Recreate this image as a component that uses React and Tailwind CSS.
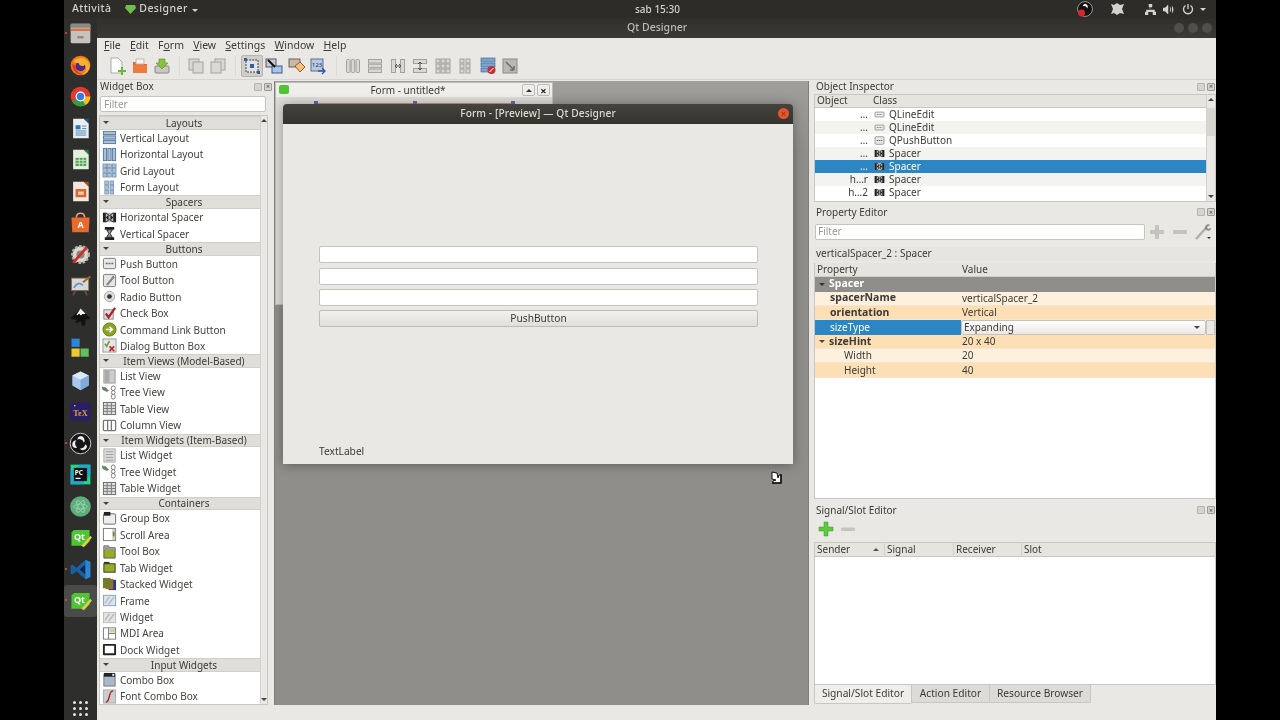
import React from 'react';

const FONT = 'font-["Noto_Sans",sans-serif]';

function Ico({ k, s = 15 }) {
  const p = { width: s, height: s, viewBox: '0 0 16 16', className: 'shrink-0' };
  switch (k) {
    case 'vl': return <svg {...p}><g fill="#a9c0d8" stroke="#56779b"><rect x="1.5" y="1.5" width="13" height="3.4" /><rect x="1.5" y="6.3" width="13" height="3.4" /><rect x="1.5" y="11.1" width="13" height="3.4" /></g></svg>;
    case 'hl': return <svg {...p}><g fill="#a9c0d8" stroke="#56779b"><rect x="1.5" y="1.5" width="3.4" height="13" /><rect x="6.3" y="1.5" width="3.4" height="13" /><rect x="11.1" y="1.5" width="3.4" height="13" /></g></svg>;
    case 'gl': return <svg {...p}><g fill="#a9c0d8" stroke="#6a88a8" strokeWidth=".7">{[1, 6, 11].flatMap(x => [1, 6, 11].map(y => <rect key={x + '-' + y} x={x} y={y} width="4" height="4" />))}</g></svg>;
    case 'fl': return <svg {...p}><g fill="#a9c0d8" stroke="#6a88a8" strokeWidth=".7">{[3, 8.5].flatMap(x => [1, 6, 11].map(y => <rect key={x + '-' + y} x={x} y={y} width="4" height="4" />))}</g></svg>;
    case 'hs': return <svg {...p}><rect x="1" y="3" width="14" height="10" fill="#bbb" /><path d="M1 3h3v10H1zM12 3h3v10h-3zM4 8l3-3v6zM12 8L9 5v6z" fill="#222" /><path d="M4 3l4 3 4-3M4 13l4-3 4 3" stroke="#222" fill="none" /></svg>;
    case 'vs': return <svg {...p}><path d="M3 1h10v3H3zM3 12h10v3H3z" fill="#222" /><path d="M5 4h6L8.6 8 11 12H5l2.4-4z" fill="#999" stroke="#222" /></svg>;
    case 'pb': return <svg {...p}><rect x="1.5" y="2.5" width="13" height="11" rx="1.5" fill="#e8e8e8" stroke="#777" /><path d="M4 8h8" stroke="#666" strokeDasharray="2 1" strokeWidth="1.6" /></svg>;
    case 'tb': return <svg {...p}><rect x="1.5" y="1.5" width="13" height="13" rx="1.5" fill="#e4e4e4" stroke="#777" /><path d="M5 12l5-6 2-3 1 2-2 2-5 6z" fill="#999" stroke="#555" strokeWidth=".7" /></svg>;
    case 'rb': return <svg {...p}><circle cx="8" cy="8" r="5.5" fill="#ddd" stroke="#aaa" /><circle cx="8" cy="8" r="2.5" fill="#333" /></svg>;
    case 'cb': return <svg {...p}><rect x="2" y="4" width="10" height="10" fill="#ddd" stroke="#888" /><path d="M4 8l3 4 7-10" stroke="#b3202a" strokeWidth="2.4" fill="none" /></svg>;
    case 'cl': return <svg {...p}><circle cx="8" cy="8" r="7" fill="#8aa522" stroke="#5f7a10" /><path d="M4 8h6M8 5l3 3-3 3" stroke="#fff" strokeWidth="1.6" fill="none" /></svg>;
    case 'db': return <svg {...p}><rect x="1" y="1" width="14" height="14" fill="#e6e6e6" stroke="#999" /><path d="M3 6l2 3 3-6" stroke="#59a02b" strokeWidth="1.5" fill="none" /><path d="M8 9l5 5M13 9l-5 5" stroke="#c0272d" strokeWidth="1.8" /></svg>;
    case 'lv': return <svg {...p}><rect x="2" y="1" width="12" height="14" fill="#ccc" stroke="#999" /><path d="M3 1.5h5v13H3z" fill="#aaa" /></svg>;
    case 'tv': return <svg {...p}><path d="M0 2l4 1 3 3-2 1-4-2z" fill="#6a8f4d" stroke="#456" strokeWidth=".5" /><rect x="10" y="1" width="4" height="5" rx="2" fill="#fff" stroke="#777" /><rect x="10" y="6" width="4" height="4" rx="2" fill="#fff" stroke="#777" /><rect x="10" y="10" width="4" height="5" rx="2" fill="#fff" stroke="#777" /></svg>;
    case 'ta': return <svg {...p}><rect x="1.5" y="1.5" width="13" height="13" fill="#ddd" stroke="#666" /><path d="M5.5 1.5v13M10 1.5v13M1.5 5h13M1.5 8h13M1.5 11h13" stroke="#777" /></svg>;
    case 'cv': return <svg {...p}><rect x="1.5" y="2.5" width="13" height="11" rx="1" fill="#fff" stroke="#777" strokeWidth="1.4" /><path d="M6 2.5v11M10 2.5v11" stroke="#777" strokeWidth="1.4" /></svg>;
    case 'lw': return <svg {...p}><rect x="2" y="1" width="12" height="14" fill="#ddd" stroke="#aaa" /><path d="M4 4h8M4 7h8M4 10h8M4 13h8" stroke="#999" /></svg>;
    case 'gb': return <svg {...p}><rect x="1.5" y="3" width="13" height="11" rx="1.5" fill="#eee" stroke="#666" /><rect x="2" y="1" width="7" height="4" fill="#222" /></svg>;
    case 'sa': return <svg {...p}><rect x="1.5" y="1.5" width="13" height="13" fill="#fff" stroke="#777" /><rect x="11" y="2" width="3" height="12" fill="#ccc" /><rect x="11.5" y="5" width="2" height="5" fill="#7a8c20" /></svg>;
    case 'tob': return <svg {...p}><path d="M2 2h5l1 2h6v11H2z" fill="#9aaa25" stroke="#555" /><path d="M2 2h5l1 2h6v2H2z" fill="#999" /></svg>;
    case 'tab': return <svg {...p}><rect x="2" y="4" width="12" height="9" fill="#9aaa25" stroke="#333" /><path d="M2 2h6v2H2z" fill="#333" /></svg>;
    case 'st': return <svg {...p}><rect x="7" y="3" width="8" height="11" fill="#1e3f8a" /><rect x="4" y="2" width="8" height="11" fill="#a36a1f" /><rect x="1" y="1" width="8" height="11" fill="#6d7d2b" /></svg>;
    case 'fr': return <svg {...p}><rect x="1.5" y="2.5" width="13" height="11" fill="#dde3ea" stroke="#7fa2c7" /><path d="M3 11l5-7M7 12l6-8" stroke="#b7bfc8" strokeWidth="1.6" /></svg>;
    case 'wi': return <svg {...p}><rect x="1.5" y="2.5" width="13" height="11" fill="#e3e3e3" stroke="#bbb" /><path d="M3 11l5-7M7 12l6-8" stroke="#bbb" strokeWidth="1.6" /></svg>;
    case 'md': return <svg {...p}><rect x="1.5" y="2" width="13" height="12" fill="#fff" stroke="#777" /><path d="M7 2v12M7 8h7" stroke="#777" /><rect x="8" y="3" width="6" height="4" fill="#c3d5a6" /></svg>;
    case 'dw': return <svg {...p}><rect x="1" y="2" width="14" height="12" fill="#222" rx="1" /><rect x="3" y="4" width="10" height="8" fill="#fff" /></svg>;
    case 'co': return <svg {...p}><rect x="2" y="3" width="12" height="12" fill="#a9b9ca" stroke="#777" /><rect x="2" y="1" width="12" height="4" fill="#222" /><rect x="11" y="2" width="2" height="2" fill="#fff" /></svg>;
    case 'fc': return <svg {...p}><rect x="1.5" y="1" width="13" height="14" fill="#ccc" stroke="#aaa" /><path d="M4 14c3 0 3-3 4-7s2-5 4-5" stroke="#a32020" strokeWidth="1.4" fill="none" /></svg>;
    case 'le': return <svg {...p}><rect x="1.5" y="4.5" width="13" height="7" rx="1" fill="#eee" stroke="#777" /><path d="M4 8h8" stroke="#777" strokeDasharray="1.5 1" strokeWidth="1.6" /></svg>;
    default: return null;
  }
}

function Dock({ k }) {
  const p = { width: 23, height: 23, viewBox: '0 0 28 28' };
  switch (k) {
    case 'files': return <svg {...p}><rect x="2" y="2" width="24" height="24" rx="2" fill="#c7c3bc" /><rect x="2" y="2" width="24" height="5" fill="#8a8680" /><rect x="2" y="8" width="24" height="3" fill="#d8743f" /><rect x="10" y="17" width="8" height="3" rx="1" fill="#8f8b85" /></svg>;
    case 'firefox': return <svg {...p}><circle cx="14" cy="14" r="12" fill="#ef7a1d" /><circle cx="14" cy="15" r="6" fill="#4a2a8c" /><path d="M6 8c6-5 15-4 19 4 1 6-3 13-10 13 6-2 7-8 4-12-1 3-8 1-7-2-2 0-6 0-6-3z" fill="#f6b22a" /><path d="M4 12c0 9 7 14 13 13-7-2-9-6-9-10z" fill="#e3342c" /></svg>;
    case 'chrome': return <svg {...p}><circle cx="14" cy="14" r="12" fill="#e0392e" /><path d="M14 14h12a12 12 0 0 1-6 10.4L14 26z" fill="#f3c01c" /><path d="M14 14l6 10.4A12 12 0 0 1 3.6 20z" fill="#2f9e44" /><circle cx="14" cy="14" r="6" fill="#fff" /><circle cx="14" cy="14" r="4.5" fill="#3b78e7" /></svg>;
    case 'writer': return <svg {...p}><path d="M5 2h13l6 6v18H5z" fill="#e9eef3" /><path d="M18 2h6v6z" fill="#1e5a8c" /><path d="M8 10h6v5H8z" fill="#2b78b5" /><path d="M8 17h13M8 19.5h13M8 22h13M16 11h5M16 14h5" stroke="#2b78b5" /></svg>;
    case 'calc': return <svg {...p}><path d="M5 2h13l6 6v18H5z" fill="#e4efdf" /><path d="M18 2h6v6z" fill="#2c7a3a" /><rect x="8" y="12" width="13" height="10" fill="#4ea44f" /><path d="M8 15h13M8 18.5h13M12.5 12v10M17 12v10" stroke="#e4efdf" /></svg>;
    case 'impress': return <svg {...p}><path d="M5 2h13l6 6v18H5z" fill="#f1e7e0" /><path d="M18 2h6v6z" fill="#b84a1e" /><rect x="8" y="11" width="13" height="10" fill="#d8672b" /><rect x="11" y="14" width="7" height="4" fill="#f3c9ad" /></svg>;
    case 'store': return <svg {...p}><path d="M3 8h22l-1 18H4z" fill="#ea6a2e" /><path d="M9 8c0-7 10-7 10 0" stroke="#e9a17e" strokeWidth="2" fill="none" /><text x="14" y="21" textAnchor="middle" fill="#fff" fontSize="11" fontFamily="Noto Sans" fontWeight="700">A</text></svg>;
    case 'settings': return <svg {...p}><circle cx="14" cy="14" r="10" fill="#ddd8d2" stroke="#b7b1aa" strokeWidth="3" strokeDasharray="3 2" /><circle cx="14" cy="14" r="5" fill="#8c8781" /><path d="M6 23L21 6" stroke="#c9302c" strokeWidth="3.4" strokeLinecap="round" /></svg>;
    case 'easel': return <svg {...p}><rect x="3" y="5" width="21" height="15" fill="#d5d7da" stroke="#8a6a46" /><path d="M6 17c3-6 7-7 11-3" stroke="#6d8fb5" strokeWidth="2" fill="none" /><path d="M17 10l9-7" stroke="#9a6a2f" strokeWidth="2.5" /><path d="M8 20l-3 6M19 20l3 6" stroke="#6b5034" strokeWidth="2" /></svg>;
    case 'ink': return <svg {...p}><path d="M14 3L26 15c-2 2-6 1-6 1v6c-2 3-4 3-5 0v-3c-3 0-4 1-6 2-2-1-1-3 1-4-3 0-6 0-8-2z" fill="#111" /><path d="M14 3l6 6c-2 2-3 0-4 1s-2 2-3 0-2 2-4 1z" fill="#f2f2f2" /></svg>;
    case 'tiles': return <svg {...p}><rect x="3" y="2" width="10" height="10" fill="#2a86d8" /><rect x="3" y="14" width="10" height="10" fill="#f0c72c" /><rect x="14" y="14" width="10" height="10" fill="#62bf5e" /></svg>;
    case 'cube': return <svg {...p}><path d="M14 3l10 5v12l-10 6-10-6V8z" fill="#a9c8ea" /><path d="M14 3l10 5-10 5L4 8z" fill="#dbe9f6" /><path d="M14 13l10-5v12l-10 6z" fill="#7faadb" /></svg>;
    case 'tex': return <svg {...p}><rect x="2" y="3" width="24" height="22" fill="#2a1f66" /><text x="14" y="20" textAnchor="middle" fontSize="10" fontFamily="Liberation Serif" fill="#d8a23a" fontWeight="700">TeX</text><circle cx="7" cy="7" r="1" fill="#d8e04a" /></svg>;
    case 'obs': return <svg {...p}><circle cx="14" cy="14" r="12.5" fill="#151515" stroke="#eee" /><path d="M14 5a5 5 0 0 1 4 8 6 6 0 0 0-8-4 5 5 0 0 1 4-4zM22 18a5 5 0 0 1-9 2 6 6 0 0 0 7-5 5 5 0 0 1 2 3zM6 19a5 5 0 0 1 3-9 6 6 0 0 0 1 9 5 5 0 0 1-4 0z" fill="#eee" /></svg>;
    case 'pc': return <svg {...p}><rect x="2" y="2" width="24" height="24" fill="#21d789" /><path d="M2 26V10L14 2h12v12L16 26z" fill="#1fa8c9" /><rect x="6" y="6" width="16" height="16" fill="#111" /><text x="7" y="15" fontSize="8" fontFamily="Noto Sans" fontWeight="700" fill="#fff">PC</text><rect x="8" y="18" width="6" height="1.5" fill="#fff" /></svg>;
    case 'atom': return <svg {...p}><circle cx="14" cy="14" r="12.5" fill="#5fae7e" /><g stroke="#9bd5b1" fill="none"><ellipse cx="14" cy="14" rx="8" ry="3" /><ellipse cx="14" cy="14" rx="8" ry="3" transform="rotate(60 14 14)" /><ellipse cx="14" cy="14" rx="8" ry="3" transform="rotate(120 14 14)" /></g></svg>;
    case 'qt': return <svg {...p}><path d="M6 5h19v14l-5 5H3V8z" fill="#4fc435" /><text x="6" y="17" fontSize="11" fontFamily="Noto Sans" fontWeight="700" fill="#fff">Qt</text><path d="M15 24L26 12l2 2-10 12z" fill="#e8c94a" /></svg>;
    case 'vs': return <svg {...p}><path d="M20 2l6 3v18l-6 3-11-10-5 4-2-1V9l2-1 5 4z" fill="#1c5f9f" /><path d="M20 8v12l-7-6z" fill="#0f2a47" /><path d="M20 2l6 3v18l-6 3z" fill="#2b87d1" /></svg>;
    default: return null;
  }
}

const DOCK = [['files', 1], ['firefox'], ['chrome'], ['writer'], ['calc'], ['impress'], ['store'], ['settings'], ['easel'], ['ink'], ['tiles'], ['cube'], ['tex'], ['obs', 1], ['pc'], ['atom'], ['qt'], ['vs', 1], ['qt', 1, 1]];

const BOX = [
  ['Layouts', [['vl', 'Vertical Layout'], ['hl', 'Horizontal Layout'], ['gl', 'Grid Layout'], ['fl', 'Form Layout']]],
  ['Spacers', [['hs', 'Horizontal Spacer'], ['vs', 'Vertical Spacer']]],
  ['Buttons', [['pb', 'Push Button'], ['tb', 'Tool Button'], ['rb', 'Radio Button'], ['cb', 'Check Box'], ['cl', 'Command Link Button'], ['db', 'Dialog Button Box']]],
  ['Item Views (Model-Based)', [['lv', 'List View'], ['tv', 'Tree View'], ['ta', 'Table View'], ['cv', 'Column View']]],
  ['Item Widgets (Item-Based)', [['lw', 'List Widget'], ['tv', 'Tree Widget'], ['ta', 'Table Widget']]],
  ['Containers', [['gb', 'Group Box'], ['sa', 'Scroll Area'], ['tob', 'Tool Box'], ['tab', 'Tab Widget'], ['st', 'Stacked Widget'], ['fr', 'Frame'], ['wi', 'Widget'], ['md', 'MDI Area'], ['dw', 'Dock Widget']]],
  ['Input Widgets', [['co', 'Combo Box'], ['fc', 'Font Combo Box']]],
];

const Tri = ({ c = 'border-t-[#444]' }) => <span className={'inline-block shrink-0 w-0 h-0 border-x-[3.5px] border-x-transparent border-t-[3.5px] ' + c} />;

function DockBtns() {
  return (
    <div className="flex gap-[2px]">
      <span className="w-[8px] h-[8px] border border-[#b5b4ae] rounded-[1px] bg-[#d5d4d0]" />
      <span className="w-[8px] h-[8px] border border-[#9a9994] rounded-[1px] bg-[#d5d4d0] flex items-center justify-center text-[7px] leading-none text-[#444]">×</span>
    </div>
  );
}

function TB({ children, active }) {
  return <div className={'w-[22.5px] h-[22px] shrink-0 flex items-center justify-center rounded-[2px] ' + (active ? 'bg-[#cfcec9] border border-[#b5b4ae]' : '')}>{children}</div>;
}

const Sep = () => <span className="w-px h-[20px] mx-[5px] bg-[#dbdad5] shrink-0" />;

const I20 = { width: 18, height: 18, viewBox: '0 0 18 18' };
const GL = 'fill-[#d9d8d3] stroke-[#a3a29c]';

function Toolbar() {
  return (
    <div className="h-[28px] shrink-0 bg-[#e9e8e4] flex items-center pl-[9px] border-b border-[#d6d5d0]">
      <TB><svg {...I20}><path d="M3 1h7l4 4v11H3z" fill="#fff" stroke="#aaa" /><path d="M10 13h3v-3h2v3h3v2h-3v3h-2v-3h-3z" fill="#6cb33f" /></svg></TB>
      <TB><svg {...I20}><path d="M2 5h5l1 2h8v9H2z" fill="#e8682a" /><path d="M5 2h8v5H5z" fill="#f5f5f5" stroke="#bbb" /><path d="M2 8h14v8H2z" fill="#ee7b3a" /></svg></TB>
      <TB><svg {...I20}><rect x="2" y="9" width="14" height="7" rx="1" fill="#c9c8c2" stroke="#888" /><path d="M6 2h6v4h3l-6 6-6-6h3z" fill="#8cbf3f" stroke="#5d8a1e" strokeWidth=".6" /></svg></TB>
      <Sep />
      <TB><svg {...I20}><rect x="2" y="2" width="10" height="11" className={GL} /><rect x="6" y="5" width="10" height="11" className={GL} /></svg></TB>
      <TB><svg {...I20}><rect x="6" y="2" width="10" height="11" className={GL} /><rect x="2" y="5" width="10" height="11" className={GL} /></svg></TB>
      <Sep />
      <TB active><svg {...I20}><path d="M3 3h12v12H3z" fill="#dfe3e8" stroke="#444" strokeDasharray="2 1" /><rect x="7" y="7" width="4" height="4" fill="#3b5b9a" /><rect x="1" y="1" width="3" height="3" fill="#3b5b9a" /><rect x="14" y="14" width="3" height="3" fill="#3b5b9a" /></svg></TB>
      <TB><svg {...I20}><rect x="1" y="2" width="10" height="8" fill="#c8ccd2" stroke="#556" /><rect x="7" y="9" width="10" height="7" fill="#a8c4e6" stroke="#3a5a8a" /><path d="M3 3l7 7" stroke="#111" strokeWidth="2" /></svg></TB>
      <TB><svg {...I20}><rect x="1" y="2" width="11" height="8" fill="#c8b8a8" stroke="#666" /><path d="M7 9l5-4 5 5-5 5z" fill="#f1c27d" stroke="#a6541d" /></svg></TB>
      <TB><svg {...I20}><rect x="1" y="2" width="12" height="12" fill="#b8c8e0" stroke="#56719a" /><text x="2" y="10" fontSize="6" fontFamily="Noto Sans" fill="#234">123</text><path d="M8 14h6M12 11l3 3-3 3" stroke="#2a5cb0" strokeWidth="1.4" fill="none" /></svg></TB>
      <Sep />
      <TB><svg {...I20}><g className={GL}><rect x="2.5" y="2.5" width="3.5" height="13" rx="1" /><rect x="7.2" y="2.5" width="3.5" height="13" rx="1" /><rect x="12" y="2.5" width="3.5" height="13" rx="1" /></g></svg></TB>
      <TB><svg {...I20}><g className={GL}><rect x="2.5" y="2.5" width="13" height="3.5" /><rect x="2.5" y="7.2" width="13" height="3.5" /><rect x="2.5" y="12" width="13" height="3.5" /></g></svg></TB>
      <TB><svg {...I20}><g className={GL}><rect x="2.5" y="2.5" width="4" height="13" /><rect x="11.5" y="2.5" width="4" height="13" /></g><path d="M6 9h6M6 9l2-2M6 9l2 2M12 9l-2-2M12 9l-2 2" stroke="#555" /></svg></TB>
      <TB><svg {...I20}><g className={GL}><rect x="2.5" y="2.5" width="13" height="4" /><rect x="2.5" y="11.5" width="13" height="4" /></g><path d="M9 5v8M9 5L7 7M9 5l2 2M9 13l-2-2M9 13l2-2" stroke="#555" /></svg></TB>
      <TB><svg {...I20}><g className={GL}>{[2, 7, 12].flatMap(x => [2, 7, 12].map(y => <rect key={x + '_' + y} x={x} y={y} width="4" height="4" />))}</g></svg></TB>
      <TB><svg {...I20}><g className={GL}>{[4, 10].flatMap(x => [2, 7, 12].map(y => <rect key={x + '_' + y} x={x} y={y} width="4" height="4" />))}</g></svg></TB>
      <TB><svg {...I20}><g fill="#7aa3cf" stroke="#38628e" strokeWidth=".6"><rect x="2" y="1" width="14" height="4" /><rect x="2" y="6" width="14" height="4" /><rect x="2" y="11" width="9" height="4" /></g><circle cx="12.5" cy="13" r="4" fill="#c0303a" /><path d="M10.5 15l4-4" stroke="#fff" /></svg></TB>
      <TB><svg {...I20}><rect x="2" y="2" width="14" height="14" fill="#b9b8b3" stroke="#8d8c87" /><path d="M5 5l8 8M13 13h-4M13 13V9" stroke="#6e6d68" strokeWidth="1.5" fill="none" /></svg></TB>
    </div>
  );
}

function WidgetBox() {
  return (
    <aside className="w-[177px] shrink-0 flex flex-col pl-[2px]">
      <div className="h-[13px] flex items-center justify-between pl-[1px] pr-[2px] text-[10px] text-[#3c3b37]">
        <span>Widget Box</span><DockBtns />
      </div>
      <div className="mt-[3px] ml-[1px] w-[166px] h-[16px] bg-white border border-[#c4c3bd] rounded-[2px] px-[3px] flex items-center text-[#9a9a96] text-[10px]">Filter</div>
      <div className="mt-[3px] w-[169px] h-[589.5px] flex border border-[#c8c7c2] bg-white overflow-hidden">
        <div className="w-[160px] flex flex-col">
          {BOX.map(([h, items]) => (
            <div key={h}>
              <div className="h-[13.65px] bg-[#dfded9] border-y border-[#cfcec9] relative flex items-center justify-center pl-[8px] text-[#3c3b37] text-[10px] leading-none whitespace-nowrap">
                <span className="absolute left-[3px] top-[4px] flex"><Tri /></span>{h}
              </div>
              {items.map(([k, t]) => (
                <div key={t} className="h-[16.45px] flex items-center pl-[2px] gap-[3px] text-[#45443f] text-[10px] leading-none whitespace-nowrap">
                  <Ico k={k} /><span>{t}</span>
                </div>
              ))}
            </div>
          ))}
        </div>
        <div className="flex-1 bg-[#e9e8e4] border-l border-[#d2d1cc] flex flex-col justify-between items-center py-[3px]">
          <span className="w-0 h-0 border-x-[3px] border-x-transparent border-b-[3px] border-b-[#444]" />
          <span className="w-0 h-0 border-x-[3px] border-x-transparent border-t-[3px] border-t-[#444]" />
        </div>
      </div>
    </aside>
  );
}

function Preview() {
  return (
    <div className="absolute left-[8px] top-[23px] w-[510px] h-[360px] flex flex-col rounded-t-[4px] overflow-hidden shadow-[0_1px_12px_rgba(0,0,0,0.35)]">
      <div className="h-[20px] shrink-0 bg-gradient-to-b from-[#45433e] to-[#34332e] relative flex items-center justify-center text-[#dfdbd2] text-[10.2px] font-medium tracking-[0.1px]">
        Form - [Preview] — Qt Designer
        <span className="absolute right-[4px] top-[4px] w-[11px] h-[11px] rounded-full bg-[#e2562c] flex items-center justify-center text-[9px] leading-none text-[#8a3016]">×</span>
      </div>
      <div className="flex-1 bg-[#e9e8e4] flex flex-col pl-[36px] pt-[122px] pb-[5px] text-[#3c3b37] text-[10.2px]">
        <div className="w-[439px] h-[17px] shrink-0 bg-white border border-[#c4c3bd] rounded-[2px]" />
        <div className="w-[439px] h-[17px] shrink-0 mt-[4.5px] bg-white border border-[#c4c3bd] rounded-[2px]" />
        <div className="w-[439px] h-[17px] shrink-0 mt-[4.5px] bg-white border border-[#c4c3bd] rounded-[2px]" />
        <div className="w-[439px] h-[17px] shrink-0 mt-[4px] bg-gradient-to-b from-[#f2f1ee] to-[#e0dfda] border border-[#bdbcb6] rounded-[2px] flex items-center justify-center">PushButton</div>
        <div className="mt-auto">TextLabel</div>
      </div>
    </div>
  );
}

function Central() {
  return (
    <main className="w-[535px] shrink-0 h-[624px] mt-[1px] bg-[linear-gradient(#a09f9b,#8f8e8a_70px)] border-x border-[#807f7b] relative overflow-hidden">
      <div className="absolute left-[0px] top-[1px] w-[278px] h-[223px] bg-[#dedcd7] border border-[#bdbcb6]">
        <div className="h-[14px] bg-[#efeeea] relative flex items-center justify-center pr-[12px] text-[#3c3b37] text-[10px]">
          <span className="absolute left-[3px] top-[2px] w-[10px] h-[9px] bg-[#4fc435] rounded-[2px]" />
          Form - untitled*
          <span className="absolute right-[17px] top-[1px] w-[13px] h-[12px] border border-[#bbb] rounded-[2px] flex items-center justify-center"><span className="w-0 h-0 border-x-[3px] border-x-transparent border-b-[3px] border-b-[#333]" /></span>
          <span className="absolute right-[2px] top-[1px] w-[13px] h-[12px] border border-[#bbb] rounded-[2px] flex items-center justify-center text-[11px] leading-none font-bold text-[#222]">×</span>
        </div>
        <span className="absolute left-[40px] top-[20px] w-[198px] h-px bg-[#c98f85]" />
        <span className="absolute left-[38px] top-[18px] w-[4px] h-[4px] bg-[#6a65b0]" />
        <span className="absolute left-[137px] top-[18px] w-[4px] h-[4px] bg-[#6a65b0]" />
        <span className="absolute left-[235px] top-[18px] w-[4px] h-[4px] bg-[#6a65b0]" />
        <span className="absolute left-[7px] top-[110px] w-[2px] h-[15px] bg-[#a7a0e0]" />
      </div>
      <Preview />
      <svg className="absolute left-[494px] top-[390px]" width="14" height="14" viewBox="0 0 14 14"><path d="M3 1l5 1 1 5 1-3h2v8H4v-2l3-1-4-1z" fill="#fff" stroke="#111" /><path d="M3 12h9V3" stroke="#111" strokeWidth="1.5" fill="none" /></svg>
    </main>
  );
}

const OI = [['…', 'le', 'QLineEdit', 0], ['…', 'le', 'QLineEdit', 1], ['…', 'pb', 'QPushButton', 0], ['…', 'hs', 'Spacer', 1], ['…', 'hs', 'Spacer', 2], ['h…r', 'hs', 'Spacer', 1], ['h…2', 'hs', 'Spacer', 0]];

const PROPS = [
  ['spacerName', 'verticalSpacer_2', 0, 1],
  ['orientation', 'Vertical', 1, 1],
  ['sizeType', '', 2, 0],
  ['sizeHint', '20 x 40', 1, 1],
  ['Width', '20', 0, 0],
  ['Height', '40', 1, 0],
];

function Right() {
  return (
    <aside className="flex-1 ml-[4px] flex flex-col text-[#3c3b37] text-[10px] min-w-0">
      <div className="h-[13px] flex items-center justify-between pl-[3px] pr-[1px]"><span>Object Inspector</span><DockBtns /></div>
      <div className="h-[108px] mt-[1px] ml-[1px] border border-[#c8c7c2] bg-white flex overflow-hidden">
        <div className="flex-1 min-w-0">
          <div className="h-[12.5px] bg-[#e5e4df] border-b border-[#c8c7c2] flex items-center"><span className="w-[58px] pl-[2px]">Object</span><span>Class</span></div>
          {OI.map(([o, k, c, a], i) => (
            <div key={i} className={'h-[13px] flex items-center ' + (a === 2 ? 'bg-[#2c86c4] text-white' : a === 1 ? 'bg-[#f4f3f0]' : 'bg-white')}>
              <span className="w-[53px] text-right">{o}</span>
              <span className="ml-[6px] w-[11px] flex justify-center"><Ico k={k} s={11} /></span>
              <span className="ml-[4px]">{c}</span>
            </div>
          ))}
        </div>
        <div className="w-[9px] bg-[#e9e8e4] border-l border-[#d2d1cc] flex flex-col justify-between items-center py-[3px] relative">
          <span className="w-0 h-0 border-x-[3px] border-x-transparent border-b-[3px] border-b-[#444]" />
          <span className="absolute left-0 top-[13px] w-[8px] h-[28px] bg-[#d6d5d0]" />
          <span className="w-0 h-0 border-x-[3px] border-x-transparent border-t-[3px] border-t-[#444]" />
        </div>
      </div>
      <div className="h-[13px] mt-[3.5px] flex items-center justify-between pl-[3px] pr-[1px]"><span>Property Editor</span><DockBtns /></div>
      <div className="mt-[5px] h-[16px] flex items-center">
        <div className="ml-[2px] w-[330px] h-[16px] bg-white border border-[#c4c3bd] rounded-[2px] px-[2px] flex items-center text-[#9a9a96]">Filter</div>
        <svg className="ml-[4px]" width="16" height="16" viewBox="0 0 16 16"><path d="M6 1h4v5h5v4h-5v5H6v-5H1V6h5z" fill="#c4c3be" /></svg>
        <svg className="ml-[7px]" width="16" height="16" viewBox="0 0 16 16"><rect x="1" y="6" width="14" height="4" rx="1" fill="#c4c3be" /></svg>
        <svg className="ml-[6px]" width="18" height="18" viewBox="0 0 18 18"><path d="M2 16L12 5" stroke="#b0afaa" strokeWidth="2.5" /><path d="M11 6c-1-3 3-6 5-4l-3 2 1 2 3-1c0 3-3 4-6 1z" fill="#8d8c87" /><path d="M13 14l2 2 2-2z" fill="#333" /></svg>
      </div>
      <div className="h-[14px] mt-[7px] ml-[1px] bg-[#e6e5e0] pl-[2px] flex items-center">verticalSpacer_2 : Spacer</div>
      <div className="flex-none h-[236px] ml-[1px] mt-[2px] border-x border-b border-[#c8c7c2] bg-white">
        <div className="h-[14px] bg-[#e5e4df] flex items-center border-b border-[#d0cfca]"><span className="w-[147px] pl-[2px]">Property</span><span>Value</span></div>
        <div className="h-[15px] bg-[#8f8e8a] flex items-center text-white font-bold text-[10.5px] pl-[4px] gap-[4px]"><Tri c="border-t-[#333]" />Spacer</div>
        {PROPS.map(([n, v, t, b]) => {
          const bg = t === 0 ? 'bg-[#fdf0dc]' : 'bg-[#fcdfb4]';
          if (t === 2) return (
            <div key={n} className="h-[14.4px] flex items-center">
              <span className="w-[146px] h-full bg-[#2c86c4] text-white pl-[15px] flex items-center">{n}</span>
              <div className="flex-1 h-full bg-gradient-to-b from-white to-[#e9e8e4] border border-[#c4c3bd] rounded-[2px] pl-[2px] pr-[5px] flex items-center justify-between">Expanding<Tri /></div>
              <span className="w-[9px] h-full bg-[#e9e8e4] border border-[#c4c3bd]" />
            </div>
          );
          const indent = n === 'Width' || n === 'Height';
          return (
            <div key={n} className={'h-[14.4px] flex items-center border-b border-[#f3e6d0] ' + bg}>
              <span className={'w-[147px] flex items-center ' + (indent ? 'pl-[29px]' : n === 'sizeHint' ? 'pl-[4px] font-bold gap-[4px] text-[10.5px]' : 'pl-[15px]') + (b && n !== 'sizeHint' ? ' font-bold text-[10.5px]' : '')}>
                {n === 'sizeHint' && <Tri />}{n}
              </span>
              <span>{v}</span>
            </div>
          );
        })}
      </div>
      <div className="h-[13px] mt-[5px] flex items-center justify-between pl-[3px] pr-[1px]"><span>Signal/Slot Editor</span><DockBtns /></div>
      <div className="h-[18px] mt-[3px] pl-[5px] flex items-center gap-[6px]">
        <svg width="16" height="16" viewBox="0 0 16 16"><path d="M6 1h4v5h5v4h-5v5H6v-5H1V6h5z" fill="#5cc93f" stroke="#3a9a25" strokeWidth=".5" /></svg>
        <svg width="16" height="16" viewBox="0 0 16 16"><rect x="1" y="6.5" width="14" height="3.5" rx="1" fill="#c4c3be" /></svg>
      </div>
      <div className="h-[143px] mt-[4.5px] ml-[1px] border border-[#c8c7c2] bg-white">
        <div className="h-[14px] bg-[#e5e4df] border-b border-[#c8c7c2] flex items-center">
          <span className="w-[69px] pl-[2px] relative">Sender<span className="absolute right-[5px] top-[6px] w-0 h-0 border-x-[3px] border-x-transparent border-b-[3px] border-b-[#555]" /></span>
          <span className="w-[69px] pl-[2px] border-l border-[#d2d1cc]">Signal</span>
          <span className="w-[68px] pl-[2px] border-l border-[#d2d1cc]">Receiver</span>
          <span className="pl-[2px] border-l border-[#d2d1cc]">Slot</span>
        </div>
      </div>
      <div className="flex ml-[1px] h-[19px] shrink-0 text-[10.2px]">
        <span className="w-[98px] bg-[#efeeea] border border-t-0 border-[#c8c7c2] rounded-b-[2px] flex items-center justify-center">Signal/Slot Editor</span>
        <span className="w-[78px] h-[18px] bg-[#dcdbd6] border-b border-r border-[#c8c7c2] flex items-center justify-center">Action Editor</span>
        <span className="w-[101px] h-[18px] bg-[#dcdbd6] border-b border-r border-[#c8c7c2] flex items-center justify-center">Resource Browser</span>
      </div>
    </aside>
  );
}

const MENU = [['', 'F', 'ile'], ['', 'E', 'dit'], ['F', 'o', 'rm'], ['', 'V', 'iew'], ['', 'S', 'ettings'], ['', 'W', 'indow'], ['', 'H', 'elp']];

export default function App() {
  return (
    <div className={'w-[1280px] h-[720px] bg-black flex justify-center overflow-hidden blur-[0.3px] ' + FONT}>
      <div className="w-[1152px] h-full flex flex-col">
        <div className="h-[18px] shrink-0 bg-[#2d2c29] relative flex items-center justify-between pl-[8px] pr-[10px] text-[#d3d2cd] text-[10.5px]">
          <div className="flex items-center gap-[14px] font-medium tracking-[0.4px]">
            <span>Attività</span>
            <span className="flex items-center gap-[3px]">
              <svg width="11" height="9" viewBox="0 0 11 9"><path d="M1 0h9l1 3-5.500 6L0 3z" fill="#6cc04a" /></svg>Designer<span className="ml-[1px]"><Tri c="border-t-[#d3d2cd]" /></span>
            </span>
          </div>
          <span className="absolute left-[571px] top-[2px] font-medium text-[10px]">sab 15:30</span>
          <div className="flex items-center">
            <svg width="16" height="16" viewBox="0 0 28 28"><circle cx="14" cy="14" r="13" fill="#111" stroke="#eee" /><path d="M14 5a5 5 0 0 1 4 8 6 6 0 0 0-8-4 5 5 0 0 1 4-4z" fill="#eee" /><circle cx="8" cy="21" r="6" fill="#d8262c" /></svg>
            <svg className="ml-[17.5px]" width="13" height="12" viewBox="0 0 13 12"><path d="M0 1l3 1 3-2 3 2 4-1-2 5 2 5-4-1-3 2-3-2-3 1 2-5z" fill="#d3d2cd" /></svg>
            <svg className="ml-[21px]" width="11" height="11" viewBox="0 0 11 11"><path d="M4 0h3v3H4zM0 8h3v3H0zM8 8h3v3H8z M5 3v2M1.5 8V6h8v2" fill="#d3d2cd" stroke="#d3d2cd" strokeWidth=".5" /></svg>
            <svg className="ml-[7px]" width="11" height="11" viewBox="0 0 11 11"><path d="M0 4h2l3-3v9L2 7H0zM7 3c1 1 1 4 0 5M9 2c1.5 2 1.5 5 0 7" fill="#d3d2cd" stroke="#d3d2cd" strokeWidth=".5" /></svg>
            <svg className="ml-[8.5px]" width="12" height="12" viewBox="0 0 12 12"><path d="M3.500 2.500a4.500 4.500 0 1 0 5 0M6 1v5" stroke="#d3d2cd" strokeWidth="1.3" fill="none" /></svg>
            <span className="ml-[6px] flex"><Tri c="border-t-[#d3d2cd]" /></span>
          </div>
        </div>
        <div className="flex-1 flex min-h-0">
          <nav className="w-[33px] shrink-0 bg-[#2e2e2d] flex flex-col items-center pb-[2px]">
            {DOCK.map(([k, dot, act], i) => (
              <div key={i} className={'w-full h-[31.5px] shrink-0 flex items-center justify-center relative ' + (act ? 'bg-[#4a4a48] rounded-[3px]' : '')}>
                {dot && <span className="absolute left-[1px] top-[14px] w-[2px] h-[2px] rounded-full bg-[#e2562c]" />}
                <Dock k={k} />
              </div>
            ))}
            <div className="mt-auto mb-[2px] grid grid-cols-3 gap-[3px]">
              {[0, 1, 2, 3, 4, 5, 6, 7, 8].map(i => <span key={i} className="w-[3px] h-[3px] rounded-full bg-[#e6e6e6]" />)}
            </div>
          </nav>
          <div className="flex-1 min-w-0 flex flex-col bg-[#e9e8e4] text-[#3c3b37] text-[10.5px]">
            <div className="h-[20px] shrink-0 bg-gradient-to-b from-[#302f2b] to-[#3b3a35] relative flex items-center justify-center text-[#bdbbb4] font-medium">
              <span className="absolute left-[530px]">Qt Designer</span>
              <div className="absolute right-[4px] top-[5px] flex gap-[4px]">
                <span className="w-[10px] h-[10px] rounded-full bg-[#504f4a]" />
                <span className="w-[10px] h-[10px] rounded-full bg-[#504f4a]" />
                <span className="w-[10px] h-[10px] rounded-full bg-[#504f4a]" />
              </div>
            </div>
            <div className="h-[14px] shrink-0 flex items-center pt-[1px] pl-[7px] gap-[9.2px]">
              {MENU.map(([a, u, b]) => <span key={a + u + b}>{a}<span className="underline underline-offset-1">{u}</span>{b}</span>)}
            </div>
            <Toolbar />
            <div className="flex-1 flex min-h-0">
              <WidgetBox />
              <Central />
              <Right />
            </div>
          </div>
        </div>
      </div>
    </div>
  );
}
